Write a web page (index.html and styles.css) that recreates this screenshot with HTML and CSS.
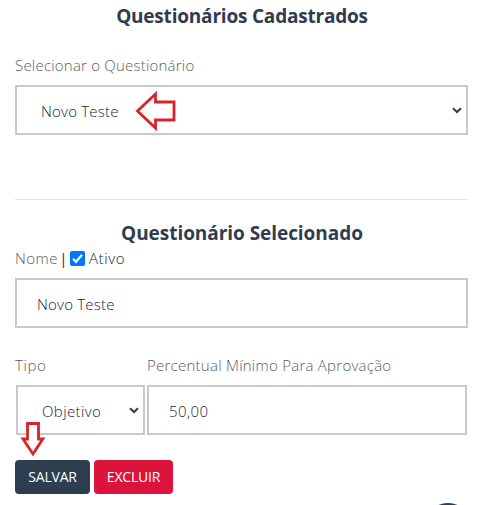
FILE: index.html
```html
<!DOCTYPE html>
<html lang="pt-BR">
<head>
<meta charset="utf-8">
<title>Questionários</title>
<link rel="stylesheet" href="styles.css">
</head>
<body>
<main class="page">
  <h2 class="title title-list">Questionários Cadastrados</h2>
  <label class="label label-select">Selecionar o Questionário</label>
  <div class="field field-main">
    <span class="value">Novo Teste</span>
    <svg class="chevron" viewBox="0 0 10 7"><path d="M1 1.2 5 5 9 1.2"/></svg>
    <svg class="arrow arrow-left" viewBox="0 0 40 38"><path d="M1.5 19 19.5 2V10H38V28H19.5V36Z"/></svg>
  </div>
  <hr class="divider">
  <h2 class="title title-selected">Questionário Selecionado</h2>
  <div class="name-row">
    <span class="label label-name">Nome</span>
    <span class="bar">|</span>
    <svg class="check" viewBox="0 0 15 15"><rect width="15" height="15" rx="2"/><path d="M3 7.8 6 10.8 12 3.8"/></svg>
    <span class="active">Ativo</span>
  </div>
  <div class="field field-name"><span class="value">Novo Teste</span></div>
  <div class="columns">
    <div class="column-type">
      <label class="label label-type">Tipo</label>
      <div class="field field-type">
        <span class="value value-type">Objetivo</span>
        <svg class="chevron" viewBox="0 0 10 7"><path d="M1 1.2 5 5 9 1.2"/></svg>
      </div>
    </div>
    <div class="column-percent">
      <label class="label label-percent">Percentual Mínimo Para Aprovação</label>
      <div class="field field-percent"><span class="value value-percent">50,00</span></div>
    </div>
  </div>
  <div class="actions">
    <button class="button save"><span class="save-text">SALVAR</span></button>
    <button class="button delete"><span class="delete-text">EXCLUIR</span></button>
    <svg class="arrow arrow-down" viewBox="0 0 24 35"><path d="M6.5 1.5H17.5V17H21.8L12 32 2 17H6.5Z"/></svg>
  </div>
  <span class="floating"></span>
</main>
</body>
</html>
```
FILE: styles.css
```css
* { box-sizing: border-box; }
body {
  margin: 0;
  background: #fff;
  color: #2c3e50;
  font: 300 15px/20px "Open Sans", "Noto Sans", sans-serif;
  letter-spacing: .21px;
}
.page {
  position: relative;
  height: 505px;
  padding: 4px 10px 0 15px;
  overflow: hidden;
}
.title {
  margin: 0;
  font-size: 19px;
  line-height: 24px;
  font-weight: 700;
  text-align: center;
  white-space: nowrap;
  color: #2f3c4e;
}
.title-list { padding-left: 1px; letter-spacing: -.2px; }
.title-selected { padding-left: 1px; letter-spacing: -.05px; }
.label { display: block; color: #5c5c5c; white-space: nowrap; }
.label-select { margin-top: 27px; }
.field {
  position: relative;
  display: flex;
  align-items: center;
  height: 50px;
  padding: 1px 4px 0 20px;
  border: 2px solid #c9c9c9;
  background: #fff;
}
.value { color: #182633; white-space: nowrap; }
.field-main { margin-top: 10px; padding-left: 24px; }
.chevron { width: 10px; height: 7px; margin-left: auto; margin-top: -1px; }
.chevron path { fill: none; stroke: #2c3e50; stroke-width: 2; }
.arrow { position: absolute; overflow: visible; }
.arrow path { fill: #fff; stroke: #d8232a; stroke-width: 2.8; }
.arrow-left { left: 119px; top: 5px; width: 40px; height: 38px; }
.divider { height: 1px; margin: 64px 0 21px; border: 0; background: #e3e3e3; }
.name-row { display: flex; align-items: center; height: 20px; margin-top: 3px; }
.label-name { width: 43px; letter-spacing: .5px; }
.bar { width: 9px; margin-left: 1px; color: #1f2d3b; font-weight: 400; text-align: center; }
.check { width: 15px; height: 15px; margin-left: 2px; }
.check rect { fill: #0075ff; }
.check path { fill: none; stroke: #fff; stroke-width: 2.3; }
.active { margin-left: 4px; color: #182633; letter-spacing: .6px; }
.field-name { margin-top: 10px; }
.columns { display: flex; gap: 2px; margin: 27px 1px 0 0; }
.column-type { width: 130px; }
.column-percent { flex: 1; }
.label-type { letter-spacing: .6px; }
.label-percent { letter-spacing: .25px; }
.field-type { margin: 10px 0 0 1px; padding-left: 24px; }
.value-type { letter-spacing: .4px; }
.value-percent { letter-spacing: .4px; }
.field-percent { margin-top: 10px; }
.actions { position: relative; display: flex; gap: 4px; margin-top: 25px; }
.button {
  height: 34px;
  padding: 0;
  border: 0;
  border-radius: 4px;
  color: #fff;
  font: 400 14px/34px "Open Sans", "Noto Sans", sans-serif;
  letter-spacing: -.2px;
}
.save { width: 75px; background: #2c3e50; }
.delete { width: 79px; background: #dc143c; }
.arrow-down { left: 6px; top: -38px; width: 24px; height: 35px; }
.floating {
  position: absolute;
  left: 423px;
  top: 503px;
  width: 50px;
  height: 50px;
  border-radius: 50%;
  background: #2c3e50;
}
```
